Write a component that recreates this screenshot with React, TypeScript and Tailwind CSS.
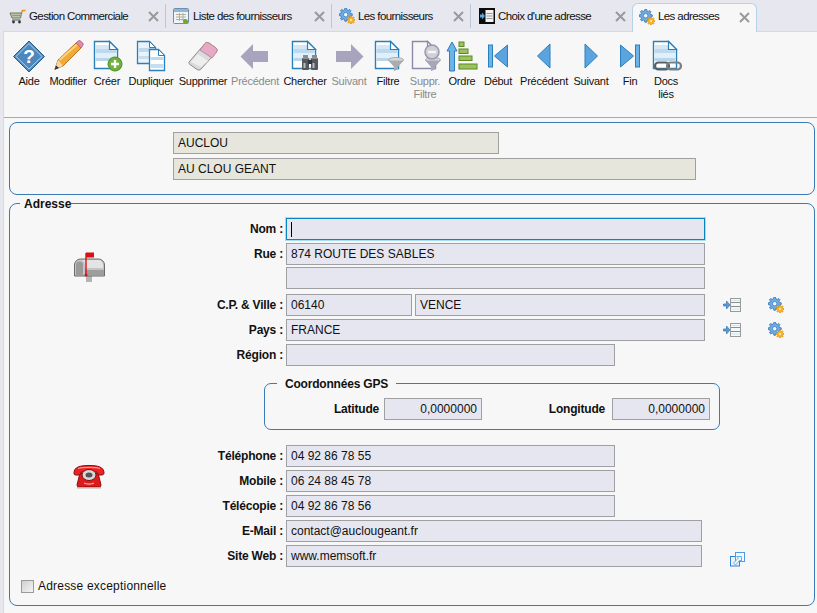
import type { ReactNode } from "react";

const FONT = "font-['Liberation_Sans',Arial,sans-serif]";

// teeth outline for the blue and orange cogs
function cogPath(cx: number, cy: number, outer: number, inner: number, teeth: number) {
  const pts: string[] = [];
  for (let i = 0; i < teeth; i++) {
    const step = (Math.PI * 2) / teeth;
    const a = i * step;
    [
      [a - step * 0.3, inner],
      [a - step * 0.16, outer],
      [a + step * 0.16, outer],
      [a + step * 0.3, inner],
    ].forEach(([t, r]) => {
      pts.push(`${(cx + Math.cos(t) * r).toFixed(2)} ${(cy + Math.sin(t) * r).toFixed(2)}`);
    });
  }
  return `M${pts.join("L")}Z`;
}

function Gear({ size = 16 }: { size?: number }) {
  return (
    <svg width={size} height={size} viewBox="0 0 16 16">
      <path d={cogPath(6.7, 6.7, 6.6, 5, 8)} fill="#6fabe2" stroke="#2f74b5" strokeWidth="0.8" />
      <circle cx="6.7" cy="6.7" r="2.2" fill="#f2f7fc" stroke="#2f74b5" strokeWidth="0.7" />
      <path d={cogPath(12, 12, 4, 2.9, 8)} fill="#f7b526" stroke="#dd8a10" strokeWidth="0.6" />
      <circle cx="12" cy="12" r="1" fill="#fff3c8" />
    </svg>
  );
}

function ListArrow() {
  return (
    <svg width="18" height="14" viewBox="0 0 18 14">
      <rect x="7.5" y="0.5" width="10" height="13" fill="#f3f8fb" stroke="#9a9a9a" />
      <path d="M8 4.500h9M8 8.500h9" stroke="#8c8c8c" />
      <path d="M8 2.500h9M8 11h9" stroke="#cfe8f2" />
      <path d="M0.500 6h3V3l3.500 4-3.500 4V8h-3z" fill="#5b9bd5" stroke="#3c7fbd" strokeWidth="0.8" />
    </svg>
  );
}

function ExternalIcon() {
  return (
    <svg width="15" height="15" viewBox="0 0 15 15" fill="none">
      <rect x="0.5" y="4.500" width="9" height="9.500" fill="#eaf4fd" stroke="#2f80d8" />
      <rect x="5.500" y="0.500" width="9" height="9" fill="#f5f9fe" stroke="#4b9be8" />
      <path d="M3.500 11 8.500 6 6.500 4.500h5v5L10 8l-4.500 5z" fill="#f7f7f7" stroke="#5aa6e8" strokeWidth="0.9" />
    </svg>
  );
}

function Cart() {
  return (
    <svg width="17" height="15" viewBox="0 0 17 15" fill="none">
      <path d="M1 4h11.500l-1 5H3z" fill="#b9c4a8" stroke="#6f7a60" />
      <path d="M3.500 6.500h8.500" stroke="#8aa64a" />
      <path d="M12.500 4 13.500 1.500h3" stroke="#e59020" strokeWidth="1.600" />
      <path d="M3 11h8.500" stroke="#555" />
      <circle cx="4.500" cy="13" r="1.400" fill="#333" />
      <circle cx="10.500" cy="13" r="1.400" fill="#333" />
    </svg>
  );
}

function ListIcon() {
  return (
    <svg width="17" height="17" viewBox="0 0 17 17" fill="none">
      <rect x="0.500" y="0.500" width="15" height="15" rx="1" fill="#f0f4f8" stroke="#6f8ea8" />
      <rect x="1" y="1" width="14" height="3" fill="#8db6d8" />
      <path d="M3 6.500h10M3 9h10M3 11.500h10M6.500 5v8M10 5v8" stroke="#b4b0a0" />
      <circle cx="12.500" cy="13.500" r="2.500" fill="#6cab2e" />
    </svg>
  );
}

function ChoixIcon() {
  return (
    <svg width="16" height="16" viewBox="0 0 16 16">
      <rect width="16" height="16" fill="#0c0c0c" />
      <rect x="6.500" y="2" width="8" height="12" fill="#f2f2f2" />
      <path d="M7.500 5.500h6M7.500 8h6M7.500 10.500h6" stroke="#999" />
      <path d="M1 6.500h2V4.500l3 3.500-3 3.500v-2H1z" fill="#58a6e0" />
    </svg>
  );
}

function Page({ children, disabled }: { children?: ReactNode; disabled?: boolean }) {
  return (
    <>
      <path
        d="M3.500 1.500h15l8 8v19h-23z"
        fill={disabled ? "#f7f7f7" : "#fff"}
        stroke={disabled ? "#8d8aa8" : "#2a80ba"}
        strokeWidth="1.400"
      />
      {!disabled && (
        <>
          <rect x="4.500" y="5" width="14" height="4" fill="#d5e7f5" />
          <rect x="4.500" y="9" width="21" height="4" fill="#bcd9ef" />
          <rect x="4.500" y="13" width="21" height="5" fill="#e3eff8" />
          <rect x="4.500" y="18" width="21" height="3" fill="#b8d5ea" />
        </>
      )}
      <path d="M18.500 1.500v8h8z" fill="#fff" stroke={disabled ? "#8d8aa8" : "#2a80ba"} strokeWidth="1.200" />
      {children}
    </>
  );
}

function Funnel({ color = "#a9adb0" }: { color?: string }) {
  return (
    <>
      <ellipse cx="24" cy="20" rx="7.500" ry="2.500" fill="#d8d8d8" stroke={color} />
      <path d="M16.500 20.500 22 27v4l4-1.500V27l5.500-6.500z" fill={color} />
    </>
  );
}

const icons: Record<string, ReactNode> = {
  aide: (
    <>
      <path d="M16 1 31.500 16.500 16 32 .5 16.500z" fill="#4c88bd" stroke="#235f93" strokeWidth="1" />
      <path d="M16 3.500 29 16.500 16 29 3 16.500z" fill="none" stroke="#b7d2e8" strokeWidth="1" />
      <text x="16" y="23" textAnchor="middle" fontSize="19" fontWeight="700" fill="#fff" fontFamily="Liberation Sans">?</text>
    </>
  ),
  modifier: (
    <>
      <path d="M3 29 6 20 24 3l5 5L11 26z" fill="#f2a93a" stroke="#b9741a" />
      <path d="M7.500 20 25 4.500" stroke="#fbd67e" strokeWidth="2" />
      <path d="M3 29 6 20 11 26z" fill="#f1d9ae" />
      <path d="M2.500 30 4 25.500 7 28z" fill="#333" />
      <path d="M24 3 26 1.200a2 2 0 0 1 2.800 0l1.600 1.600a2 2 0 0 1 0 3L29 8z" fill="#e58aa6" stroke="#b76280" />
    </>
  ),
  creer: (
    <>
      <Page />
      <circle cx="24" cy="24" r="7" fill="#6db23a" stroke="#4c8a22" />
      <path d="M24 20v8M20 24h8" stroke="#fff" strokeWidth="2.400" />
    </>
  ),
  dupliquer: (
    <g>
      <path d="M2.500 1.500h12l6 6v16h-18z" fill="#eaf3fa" stroke="#2a80ba" strokeWidth="1.300" />
      <rect x="3.500" y="8" width="16" height="4" fill="#bcd9ef" />
      <rect x="3.500" y="16" width="16" height="3" fill="#c6def0" />
      <path d="M14.500 1.500v6h6z" fill="#fff" stroke="#2a80ba" />
      <path d="M14.500 9.500h9l6 6v15h-15z" fill="#fff" stroke="#2a80ba" strokeWidth="1.300" />
      <rect x="15.500" y="17" width="13" height="3" fill="#bcd9ef" />
      <rect x="15.500" y="24" width="13" height="4" fill="#c6def0" />
      <path d="M23.500 9.500v6h6z" fill="#fff" stroke="#2a80ba" />
    </g>
  ),
  supprimer: (
    <>
      <path d="M2 22 18 3.500a3 3 0 0 1 4-.500l7 5a3 3 0 0 1 .5 4L14 29a3 3 0 0 1-4 .5l-7-5a2 2 0 0 1-1-2.500z" fill="#d9dadb" stroke="#8c8c8c" />
      <path d="M13 10 18 3.500a3 3 0 0 1 4-.500l7 5a3 3 0 0 1 .5 4L25 18z" fill="#e8a9c4" stroke="#b58aa0" />
      <path d="M4 22 11 14l10 7-7 6z" fill="#eeeeee" />
    </>
  ),
  prev: <path d="M1.500 16.500 14 4v7h15v11H14v7z" fill="#a9a4bd" />,
  next: <path d="M30.500 16.500 18 4v7H3v11h15v7z" fill="#a9a4bd" />,
  chercher: (
    <>
      <Page />
      <rect x="13" y="18" width="7" height="12" rx="1" fill="#55585c" />
      <rect x="22" y="18" width="7" height="12" rx="1" fill="#55585c" />
      <rect x="14" y="15" width="5" height="4" fill="#8a8e92" />
      <rect x="23" y="15" width="5" height="4" fill="#8a8e92" />
      <rect x="19" y="20" width="4" height="4" fill="#33363a" />
      <rect x="14.500" y="23" width="2" height="5" fill="#b8bcc0" />
      <rect x="23.500" y="23" width="2" height="5" fill="#b8bcc0" />
    </>
  ),
  filtre: (
    <>
      <Page />
      <Funnel />
    </>
  ),
  suppr: (
    <>
      <Page disabled />
      <Funnel color="#a8a6b8" />
      <circle cx="23" cy="12" r="7" fill="#cfcfd6" stroke="#9a98ac" strokeWidth="1.500" />
      <path d="M19 12h8" stroke="#f6f6f6" strokeWidth="2.400" />
    </>
  ),
  ordre: (
    <>
      <path d="M1 11 6 2l5 9H8.500v20h-5V11z" fill="#6db3e8" stroke="#2a80ba" />
      <rect x="13" y="2" width="5" height="4.500" fill="#9cc25a" stroke="#5d8a26" />
      <rect x="13" y="9" width="9" height="4.500" fill="#9cc25a" stroke="#5d8a26" />
      <rect x="13" y="16" width="13" height="4.500" fill="#9cc25a" stroke="#5d8a26" />
      <rect x="13" y="24" width="18" height="5" fill="#9cc25a" stroke="#5d8a26" />
    </>
  ),
  debut: (
    <>
      <rect x="6.500" y="5" width="4" height="22" fill="#6db3e8" stroke="#2a80ba" />
      <path d="M12.500 16 25.500 5v22z" fill="#5ba4e0" stroke="#2a80ba" />
    </>
  ),
  gauche: <path d="M9.500 16 22 4v24z" fill="#5ba4e0" stroke="#2a80ba" />,
  droite: <path d="M22.500 16 10 4v24z" fill="#5ba4e0" stroke="#2a80ba" />,
  fin: (
    <>
      <rect x="21.500" y="5" width="4" height="22" fill="#6db3e8" stroke="#2a80ba" />
      <path d="M19.500 16 6.500 5v22z" fill="#5ba4e0" stroke="#2a80ba" />
    </>
  ),
  docs: (
    <>
      <Page />
      <rect x="5" y="22.500" width="14" height="7" rx="3.500" fill="none" stroke="#5a5e62" strokeWidth="2.200" />
      <rect x="17" y="22.500" width="14" height="7" rx="3.500" fill="none" stroke="#7c8084" strokeWidth="2.200" />
    </>
  ),
};

type ToolItem = { icon: string; label: string; width: string; disabled?: boolean };

const tools: ToolItem[] = [
  { icon: "aide", label: "Aide", width: "w-[38px]" },
  { icon: "modifier", label: "Modifier", width: "w-[40px]" },
  { icon: "creer", label: "Créer", width: "w-[38px]" },
  { icon: "dupliquer", label: "Dupliquer", width: "w-[50px]" },
  { icon: "supprimer", label: "Supprimer", width: "w-[54px]" },
  { icon: "prev", label: "Précédent", width: "w-[50px]", disabled: true },
  { icon: "chercher", label: "Chercher", width: "w-[50px]" },
  { icon: "next", label: "Suivant", width: "w-[38px]", disabled: true },
  { icon: "filtre", label: "Filtre", width: "w-[40px]" },
  { icon: "suppr", label: "Suppr. Filtre", width: "w-[34px]", disabled: true },
  { icon: "ordre", label: "Ordre", width: "w-[40px]" },
  { icon: "debut", label: "Début", width: "w-[32px]" },
  { icon: "gauche", label: "Précédent", width: "w-[60px]" },
  { icon: "droite", label: "Suivant", width: "w-[34px]" },
  { icon: "fin", label: "Fin", width: "w-[44px]" },
  { icon: "docs", label: "Docs liés", width: "w-[28px]" },
];

function Tab({
  icon,
  label,
  width,
  pad = "pl-[7px]",
  active,
  separator = true,
}: {
  icon: ReactNode;
  label: string;
  width: string;
  pad?: string;
  active?: boolean;
  separator?: boolean;
}) {
  return (
    <div
      className={`flex items-center pr-[5px] ${pad} ${width} ${
        active
          ? "h-[29px] mt-[3px] pb-[3px] bg-[#f7f7f7] border border-b-0 border-[#b5d3e8] rounded-t-[6px]"
          : `h-[24px] mt-[4px] ${separator ? "border-r border-[#b8c8d8]" : ""}`
      }`}
    >
      <span className="flex w-[17px] justify-center shrink-0">{icon}</span>
      <span className="ml-[3px] pt-[1px] text-[11.5px] tracking-[-0.6px] text-[#111] whitespace-nowrap">{label}</span>
      <svg className="ml-auto mr-[1px] mt-[1px]" width="11" height="11" viewBox="0 0 11 11">
        <path d="M1 1l9 9M10 1l-9 9" stroke="#9a9a9a" strokeWidth="2" />
      </svg>
    </div>
  );
}

function Field({
  value,
  width,
  tan,
  right,
  focused,
}: {
  value?: string;
  width: string;
  tan?: boolean;
  right?: boolean;
  focused?: boolean;
}) {
  const look = focused
    ? "bg-[#e6e6f0] border-[#0a84c1] shadow-[0_0_0_1px_#a8dcf2]"
    : tan
      ? "bg-[#e6e6dd] border-[#a0a0a0]"
      : "bg-[#e6e6f0] border-[#a0a0a4]";
  return (
    <div
      className={`flex items-center h-[22px] px-[4px] shrink-0 text-[12px] text-[#111] border ${width} ${look} ${
        right ? "justify-end" : ""
      }`}
    >
      {focused && <span className="w-px h-[15px] bg-black" />}
      {value}
    </div>
  );
}

function Row({ label, mt, children }: { label: string; mt?: string; children: ReactNode }) {
  return (
    <div className={`flex items-center h-[22px] ${mt ?? ""}`}>
      <div className="w-[83px] mr-[3px] text-right text-[12px] font-bold tracking-[-0.2px] text-[#111] whitespace-nowrap">
        {label}
      </div>
      {children}
    </div>
  );
}

function Mailbox() {
  return (
    <svg width="32" height="30" viewBox="0 0 32 30">
      <rect x="13" y="23" width="6" height="7" fill="#b4b4b4" />
      <path d="M1.500 24V13a6 6 0 0 1 6-6h18a6 6 0 0 1 6 6v11z" fill="#c4c4c4" stroke="#6a6a6a" />
      <path d="M8 8h17a5 5 0 0 1 5 5v3H12v-3a5 5 0 0 0-4-5z" fill="#e4e4e4" />
      <path d="M3 23V13a3.500 3.500 0 0 1 7 0v10z" fill="#9a9a9a" />
      <rect x="12" y="18" width="19" height="5" fill="#9e9e9e" />
      <path d="M13 23V1" stroke="#d80f14" strokeWidth="1.400" />
      <rect x="13" y="0.500" width="8" height="5" fill="#d80f14" />
      <circle cx="13" cy="23" r="1.500" fill="#d80f14" />
    </svg>
  );
}

function Telephone() {
  return (
    <svg width="32" height="24" viewBox="0 0 32 24">
      <path d="M7 8h18l3 12a2 2 0 0 1-2 2H6a2 2 0 0 1-2-2z" fill="#de1a1a" stroke="#8c0c0c" />
      <path d="M1 8C1 2 7 .5 16 .5S31 2 31 8c0 1.500-1 2-3 2h-2c-1.500 0-2-1-2-3H8c0 2-.5 3-2 3H3c-1.500 0-2-.5-2-2z" fill="#ee2222" stroke="#8c0c0c" />
      <path d="M5 3.500C9 2 23 2 27 3.500" stroke="#ff9a9a" strokeWidth="1.200" fill="none" />
      <ellipse cx="16" cy="10" rx="7" ry="5.500" fill="#d8d8d8" stroke="#7a1010" />
      <ellipse cx="16" cy="10" rx="3.500" ry="2.500" fill="#555" />
      <path d="M11 18c2 1.500 8 1.500 10 0" stroke="#ffc0c0" fill="none" />
      <rect x="4" y="22" width="24" height="1.500" fill="#b4b4b4" />
    </svg>
  );
}

export default function App() {
  return (
    <div className={`w-[817px] h-[613px] overflow-hidden bg-[#e6e7ef] ${FONT}`}>
      <div className="flex h-[31px] pl-[5px]">
        <Tab icon={<Cart />} label="Gestion Commerciale" width="w-[161px]" pad="pl-[4px]" />
        <Tab icon={<ListIcon />} label="Liste des fournisseurs" width="w-[166px]" />
        <Tab icon={<Gear />} label="Les fournisseurs" width="w-[139px]" pad="pl-[6px]" />
        <Tab icon={<ChoixIcon />} label="Choix d'une adresse" width="w-[161px]" separator={false} />
        <Tab icon={<Gear />} label="Les adresses" width="w-[125px]" pad="pl-[5px]" active />
      </div>

      <div className="ml-[3px] h-[582px] bg-[#f7f7f7] border-l border-t border-[#d9d9d9]">
        <div className="flex h-[86px] pl-[6px] pt-[8px] border-b border-[#a8a8b4]">
          {tools.map((t, i) => (
            <div key={i} className={`flex flex-col items-center shrink-0 ${t.width}`}>
              <svg width="32" height="32" viewBox="0 0 32 32" className="shrink-0">
                {icons[t.icon]}
              </svg>
              <div
                className={`mt-[3px] text-center text-[11px] leading-[13px] tracking-[-0.25px] whitespace-normal ${
                  t.disabled ? "text-[#8a8a8a]" : "text-[#111]"
                }`}
              >
                {t.label}
              </div>
            </div>
          ))}
        </div>

        <div className="ml-[5px] mt-[4px] w-[806px] h-[73px] pt-[9px] pl-[163px] border border-[#3a7ab5] rounded-[8px] flex flex-col gap-[4px]">
          <Field value="AUCLOU" width="w-[326px]" tan />
          <Field value="AU CLOU GEANT" width="w-[523px]" tan />
        </div>

        <div className="relative ml-[5px] mt-[8px] w-[806px] h-[403px] pt-[14px] border border-[#3a7ab5] rounded-[8px]">
          <span className="absolute left-[10px] top-[-7px] pl-[4px] bg-[#f7f7f7] text-[12px] leading-[14px] font-bold text-[#111]">
            Adresse
          </span>

          <div className="flex">
            <div className="w-[190px] pl-[63px] pt-[34px] shrink-0">
              <Mailbox />
            </div>
            <div>
              <Row label="Nom :">
                <Field width="w-[419px]" focused />
              </Row>
              <Row label="Rue :" mt="mt-[3px]">
                <Field value="874 ROUTE DES SABLES" width="w-[419px]" />
              </Row>
              <Row label="" mt="mt-[2px]">
                <Field width="w-[419px]" />
              </Row>
              <Row label="C.P. & Ville :" mt="mt-[5px]">
                <Field value="06140" width="w-[126px]" />
                <div className="ml-[3px]">
                  <Field value="VENCE" width="w-[290px]" />
                </div>
                <div className="ml-[18px]">
                  <ListArrow />
                </div>
                <div className="ml-[27px]">
                  <Gear />
                </div>
              </Row>
              <Row label="Pays :" mt="mt-[3px]">
                <Field value="FRANCE" width="w-[419px]" />
                <div className="ml-[18px]">
                  <ListArrow />
                </div>
                <div className="ml-[27px]">
                  <Gear />
                </div>
              </Row>
              <Row label="Région :" mt="mt-[3px]">
                <Field width="w-[329px]" />
              </Row>
            </div>
          </div>

          <div className="relative ml-[254px] mt-[17px] w-[456px] h-[47px] pt-[14px] border border-[#3a7ab5] rounded-[7px]">
            <span className="absolute left-[12px] top-[-7px] px-[8px] bg-[#f7f7f7] text-[12px] leading-[14px] font-bold tracking-[-0.2px] text-[#111]">
              Coordonnées GPS
            </span>
            <div className="flex items-center">
              <span className="w-[114px] text-right text-[12px] font-bold tracking-[-0.2px] text-[#111]">Latitude</span>
              <div className="ml-[5px]">
                <Field value="0,0000000" width="w-[98px]" right />
              </div>
              <span className="w-[123px] text-right text-[12px] font-bold tracking-[-0.2px] text-[#111]">Longitude</span>
              <div className="ml-[7px]">
                <Field value="0,0000000" width="w-[98px]" right />
              </div>
            </div>
          </div>

          <div className="flex mt-[15px]">
            <div className="w-[190px] pl-[63px] pt-[20px] shrink-0">
              <Telephone />
            </div>
            <div className="flex flex-col gap-[3px]">
              <Row label="Téléphone :">
                <Field value="04 92 86 78 55" width="w-[329px]" />
              </Row>
              <Row label="Mobile :">
                <Field value="06 24 88 45 78" width="w-[329px]" />
              </Row>
              <Row label="Télécopie :">
                <Field value="04 92 86 78 56" width="w-[329px]" />
              </Row>
              <Row label="E-Mail :">
                <Field value="contact@auclougeant.fr" width="w-[416px]" />
              </Row>
              <Row label="Site Web :">
                <Field value="www.memsoft.fr" width="w-[416px]" />
                <div className="ml-[28px] mt-[7px]">
                  <ExternalIcon />
                </div>
              </Row>
            </div>
          </div>

          <div className="flex items-center ml-[11px] mt-[10px]">
            <span className="w-[13px] h-[13px] border border-[#9a9a9a] bg-gradient-to-br from-[#d0d0d0] to-[#f4f4f4]" />
            <span className="ml-[4px] text-[12px] tracking-[0.2px] text-[#111]">Adresse exceptionnelle</span>
          </div>
        </div>
      </div>
    </div>
  );
}
